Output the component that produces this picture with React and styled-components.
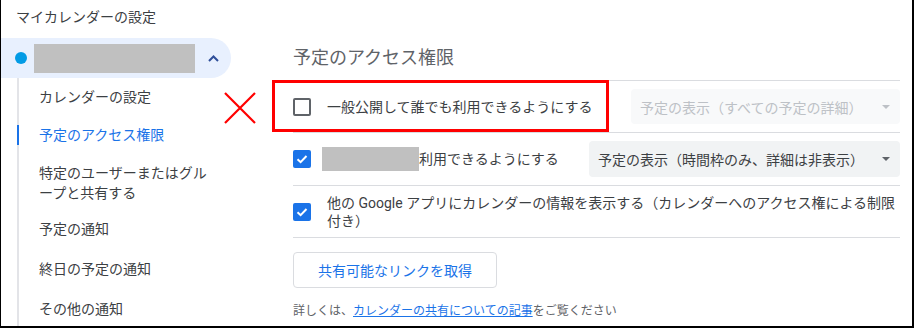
import React from "react";
import styled, { createGlobalStyle } from "styled-components";

const Global = createGlobalStyle`
  html, body { margin: 0; padding: 0; background: #fff; }
  body { font-family: Roboto, "Noto Sans CJK JP", "Noto Sans", sans-serif; color: #3c4043; }
  * { box-sizing: border-box; }
`;

const Frame = styled.div`
  width: 914px;
  height: 328px;
  border-left: 1px solid #000;
  border-right: 2px solid #000;
  border-bottom: 2px solid #000;
  overflow: hidden;
  display: grid;
  grid-template-columns: 250px 1fr;
  background: #fff;
`;

const Sidebar = styled.nav`
  display: flex;
  flex-direction: column;
`;

const SideTitle = styled.div`
  height: 38px;
  padding: 7px 0 0 15px;
  font-size: 14px;
  line-height: 20px;
  color: #3c4043;
`;

const CalendarRow = styled.div`
  width: 230px;
  height: 40px;
  flex: none;
  display: flex;
  align-items: center;
  padding-left: 14px;
  background: #e8f0fe;
  border-radius: 0 20px 20px 0;
`;

const Dot = styled.span`
  width: 12px;
  height: 12px;
  border-radius: 50%;
  background: #039be5;
  flex: none;
`;

const Redacted = styled.span`
  display: inline-block;
  flex: none;
  width: ${(p) => p.$w}px;
  height: ${(p) => p.$h}px;
  margin-left: ${(p) => p.$ml || 0}px;
  background: #c0c0c0;
`;

const Chevron = styled.svg`
  margin-left: 13px;
  flex: none;
`;

const Nav = styled.ul`
  list-style: none;
  margin: 0 0 0 16px;
  padding: 0;
  width: 213px;
  flex: 1;
  border-left: 2px solid #e3e4e8;
`;

const NavItem = styled.li`
  position: relative;
  padding: ${(p) => p.$pad};
  font-size: 14px;
  line-height: 20px;
  color: ${(p) => (p.$active ? "#1a73e8" : "#3c4043")};
  line-break: loose;

  &::before {
    content: "";
    display: ${(p) => (p.$active ? "block" : "none")};
    position: absolute;
    left: -2px;
    top: 9px;
    width: 2px;
    height: 20px;
    background: #1a73e8;
  }
`;

const Main = styled.main`
  padding: 0 12px 0 42px;
  display: flex;
  flex-direction: column;
  align-items: flex-start;
`;

const Heading = styled.h2`
  margin: 46px 0 10px;
  font-size: 18px;
  line-height: 24px;
  font-weight: 400;
  color: #5f6368;
`;

const List = styled.div`
  align-self: stretch;
  border-top: 1px solid #dadce0;
`;

const Row = styled.div`
  position: relative;
  display: flex;
  align-items: center;
  min-height: ${(p) => p.$h || 52}px;
  border-bottom: 1px solid #dadce0;
`;

const Check = styled.span`
  flex: none;
  width: 18px;
  height: 18px;
  border-radius: 2px;
  margin-right: ${(p) => p.$gap}px;
  display: flex;
  align-items: center;
  justify-content: center;
  border: ${(p) => (p.$checked ? "none" : "2px solid #5f6368")};
  background: ${(p) => (p.$checked ? "#1a73e8" : "transparent")};
`;

const Label = styled.span`
  font-size: 14px;
  line-height: 18px;
  color: #3c4043;
  flex: ${(p) => (p.$grow ? "1" : "none")};
`;

const Select = styled.div`
  margin-left: auto;
  flex: none;
  width: ${(p) => p.$w}px;
  height: ${(p) => p.$h}px;
  border-radius: 4px;
  background: ${(p) => (p.$disabled ? "#f8f9fa" : "#f1f3f4")};
  color: ${(p) => (p.$disabled ? "#bdc1c6" : "#3c4043")};
  display: flex;
  align-items: center;
  padding: 0 10px 0 9px;
  font-size: 14px;
`;

const SelectText = styled.span`
  flex: 1;
  white-space: nowrap;
`;

const Caret = styled.span`
  width: 0;
  height: 0;
  border-left: 4px solid transparent;
  border-right: 4px solid transparent;
  border-top: 4px solid ${(p) => (p.$disabled ? "#bdc1c6" : "#5f6368")};
`;

const Highlight = styled.div`
  position: absolute;
  left: -21px;
  top: -1px;
  width: 337px;
  height: 52px;
  border: 3px solid #ff0000;
  pointer-events: none;
`;

const Cross = styled.svg`
  position: absolute;
  left: -69px;
  top: 11px;
`;

const LinkButton = styled.button`
  margin-top: 14px;
  width: 204px;
  height: 36px;
  border: 1px solid #dadce0;
  border-radius: 4px;
  background: #fff;
  color: #1a73e8;
  font-family: inherit;
  font-size: 14px;
  padding: 0;
`;

const Footnote = styled.p`
  margin: 15px 0 0;
  font-size: 12px;
  line-height: 16px;
  color: #5f6368;
`;

const Anchor = styled.a`
  color: #1a73e8;
  text-decoration: underline;
`;

const CheckMark = () => (
  <svg width="14" height="14" viewBox="0 0 14 14">
    <path d="M2.5 7.2 L5.6 10.2 L11.5 4" fill="none" stroke="#fff" strokeWidth="2" />
  </svg>
);

const navItems = [
  { t: "カレンダーの設定", pad: "9px 16px 9px 20px" },
  { t: "予定のアクセス権限", pad: "9px 16px 9px 20px", active: true },
  { t: "特定のユーザーまたはグループと共有する", pad: "9px 16px 6px 20px" },
  { t: "予定の通知", pad: "10px 16px 10px 20px" },
  { t: "終日の予定の通知", pad: "10px 16px 10px 20px" },
  { t: "その他の通知", pad: "10px 16px 10px 20px" },
];

export default function App() {
  return (
    <>
      <Global />
      <Frame lang="ja">
        <Sidebar>
          <SideTitle>マイカレンダーの設定</SideTitle>
          <CalendarRow>
            <Dot />
            <Redacted $w={161} $h={29} $ml={7} />
            <Chevron width="11" height="7" viewBox="0 0 11 7">
              <path d="M1 6 L5.5 1.5 L10 6" fill="none" stroke="#2f4f9a" strokeWidth="2" />
            </Chevron>
          </CalendarRow>
          <Nav>
            {navItems.map((n) => (
              <NavItem key={n.t} $active={n.active} $pad={n.pad}>
                {n.t}
              </NavItem>
            ))}
          </Nav>
        </Sidebar>
        <Main>
          <Heading>予定のアクセス権限</Heading>
          <List>
            <Row $h={52}>
              <Check $gap={16} />
              <Label>一般公開して誰でも利用できるようにする</Label>
              <Select $w={269} $h={35} $disabled>
                <SelectText>予定の表示（すべての予定の詳細）</SelectText>
                <Caret $disabled />
              </Select>
              <Highlight />
              <Cross width="32" height="32" viewBox="0 0 32 32">
                <path d="M1 1 L31 31 M31 1 L1 31" stroke="#ff0000" strokeWidth="2.2" />
              </Cross>
            </Row>
            <Row $h={53}>
              <Check $checked $gap={11}>
                <CheckMark />
              </Check>
              <Redacted $w={97} $h={24} />
              <Label>利用できるようにする</Label>
              <Select $w={311} $h={36}>
                <SelectText>予定の表示（時間枠のみ、詳細は非表示）</SelectText>
                <Caret />
              </Select>
            </Row>
            <Row $h={52}>
              <Check $checked $gap={16}>
                <CheckMark />
              </Check>
              <Label $grow>
                他の Google アプリにカレンダーの情報を表示する（カレンダーへのアクセス権による制限付き）
              </Label>
            </Row>
          </List>
          <LinkButton>共有可能なリンクを取得</LinkButton>
          <Footnote>
            詳しくは、<Anchor>カレンダーの共有についての記事</Anchor>をご覧ください
          </Footnote>
        </Main>
      </Frame>
    </>
  );
}
